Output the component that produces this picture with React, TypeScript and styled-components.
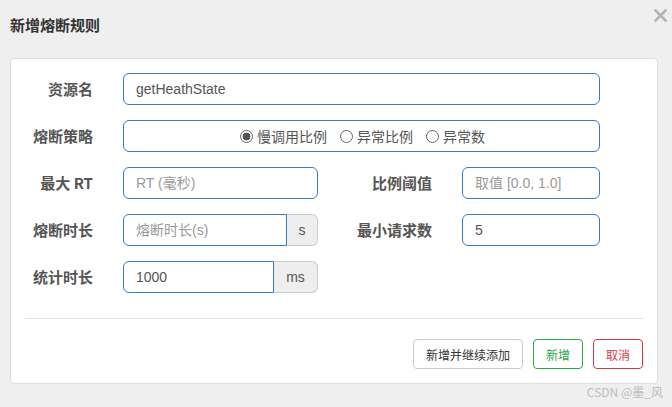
import React from "react";
import styled, { createGlobalStyle } from "styled-components";

const GlobalStyle = createGlobalStyle`
  html, body {
    margin: 0;
    padding: 0;
    background: #efefef;
  }
  body {
    font-family: "Liberation Sans", "Noto Sans CJK SC", sans-serif;
    width: 672px;
    height: 407px;
    overflow: hidden;
  }
`;

export default function App() {
  return (
    <>
      <GlobalStyle />
      <Page>
        <Header>
          <Title>新增熔断规则</Title>
          <Close aria-label="close">
            <svg width="13" height="13" viewBox="0 0 13 13">
              <path d="M1.5 1.5 L11.5 11.5 M11.5 1.5 L1.5 11.5" stroke="#b3b3b3" strokeWidth="2.6" strokeLinecap="square" />
            </svg>
          </Close>
        </Header>
        <Card>
          <Form>
            <Label>资源名</Label>
            <Field $span>
              <Input defaultValue="getHeathState" />
            </Field>

            <Label>熔断策略</Label>
            <Field $span>
              <RadioBox>
                <RadioItem>
                  <Radio $checked />
                  慢调用比例
                </RadioItem>
                <RadioItem>
                  <Radio />
                  异常比例
                </RadioItem>
                <RadioItem>
                  <Radio />
                  异常数
                </RadioItem>
              </RadioBox>
            </Field>

            <Label>最大 RT</Label>
            <Field>
              <Input placeholder="RT (毫秒)" />
            </Field>
            <Label>比例阈值</Label>
            <Field>
              <Input placeholder="取值 [0.0, 1.0]" />
            </Field>

            <Label>熔断时长</Label>
            <Field>
              <Group>
                <Input $joined placeholder="熔断时长(s)" />
                <Addon $w={31}>s</Addon>
              </Group>
            </Field>
            <Label>最小请求数</Label>
            <Field>
              <Input defaultValue="5" />
            </Field>

            <Label>统计时长</Label>
            <Field>
              <Group>
                <Input $joined defaultValue="1000" />
                <Addon $w={44}>ms</Addon>
              </Group>
            </Field>
          </Form>
          <Divider />
          <Footer>
            <Button $tone="default">新增并继续添加</Button>
            <Button $tone="success">新增</Button>
            <Button $tone="danger">取消</Button>
          </Footer>
        </Card>
        <Watermark>CSDN @墨_风</Watermark>
      </Page>
    </>
  );
}

const Page = styled.div`
  width: 672px;
  height: 407px;
  box-sizing: border-box;
  padding: 0 14px 0 10px;
  position: relative;
`;

const Header = styled.div`
  height: 58px;
  display: flex;
  align-items: flex-start;
  justify-content: space-between;
`;

const Title = styled.h4`
  margin: 16px 0 0;
  font-family: "Noto Sans CJK SC", sans-serif;
  font-size: 15px;
  font-weight: 700;
  line-height: 18px;
  color: #333;
`;

const Close = styled.span`
  display: flex;
  margin: 9px -9px 0 0;
`;

const Card = styled.div`
  width: 648px;
  box-sizing: border-box;
  background: #fff;
  border: 1px solid #ddd;
  border-radius: 4px;
  padding: 14px 14px 14px 0;
`;

const Form = styled.div`
  display: grid;
  grid-template-columns: 82px 195px 84px 138px;
  column-gap: 30px;
  row-gap: 15px;
  align-items: center;
`;

const Label = styled.label`
  text-align: right;
  font-family: "Noto Sans CJK SC", sans-serif;
  font-size: 15px;
  font-weight: 700;
  color: #555;
  line-height: 32px;
`;

const Field = styled.div<{ $span?: boolean }>`
  grid-column: ${(p) => (p.$span ? "2 / -1" : "auto")};
`;

const Input = styled.input<{ $joined?: boolean }>`
  display: block;
  width: 100%;
  height: 32px;
  box-sizing: border-box;
  padding: 6px 12px;
  border: 1px solid #3a7cc2;
  border-radius: ${(p) => (p.$joined ? "6px 0 0 6px" : "6px")};
  font-family: "Liberation Sans", "Noto Sans CJK SC", sans-serif;
  font-size: 14px;
  color: #555;
  background: #fff;
  outline: none;
  flex: 1;
  min-width: 0;

  &::placeholder {
    color: #999;
  }
`;

const Group = styled.div`
  display: flex;
`;

const Addon = styled.span<{ $w: number }>`
  width: ${(p) => p.$w}px;
  height: 32px;
  box-sizing: border-box;
  display: flex;
  align-items: center;
  justify-content: center;
  background: #eee;
  border: 1px solid #ccc;
  border-left: none;
  border-radius: 0 6px 6px 0;
  font-size: 14px;
  color: #555;
`;

const RadioBox = styled.div`
  height: 32px;
  box-sizing: border-box;
  border: 1px solid #3a7cc2;
  border-radius: 6px;
  display: flex;
  align-items: center;
  justify-content: center;
  gap: 13px;
  padding-left: 2px;
`;

const RadioItem = styled.span`
  display: flex;
  align-items: center;
  gap: 4px;
  font-family: "Noto Sans CJK SC", sans-serif;
  font-size: 14px;
  color: #555;
`;

const Radio = styled.span<{ $checked?: boolean }>`
  width: 13px;
  height: 13px;
  box-sizing: border-box;
  border-radius: 50%;
  border: 1px solid #666;
  background: ${(p) =>
    p.$checked ? "radial-gradient(circle, #555 0 3.6px, #fff 4.2px)" : "#fff"};
`;

const Divider = styled.hr`
  margin: 25px 0 20px 14px;
  border: none;
  border-top: 1px solid #e3e3e3;
`;

const tones = {
  default: { border: "#ccc", color: "#333" },
  success: { border: "#28a745", color: "#28a745" },
  danger: { border: "#dc3545", color: "#dc3545" },
};

const Footer = styled.div`
  display: flex;
  justify-content: flex-end;
  gap: 10px;
`;

const Button = styled.button<{ $tone: keyof typeof tones }>`
  height: 30px;
  padding: 0 12px;
  background: #fff;
  border: 1px solid ${(p) => tones[p.$tone].border};
  color: ${(p) => tones[p.$tone].color};
  border-radius: 4px;
  font-family: "Noto Sans CJK SC", sans-serif;
  font-size: 12px;
  cursor: pointer;
`;

const Watermark = styled.span`
  position: absolute;
  right: 9px;
  bottom: 7px;
  font-family: "Noto Sans CJK SC", sans-serif;
  font-size: 12px;
  color: #bdbdbd;
`;
